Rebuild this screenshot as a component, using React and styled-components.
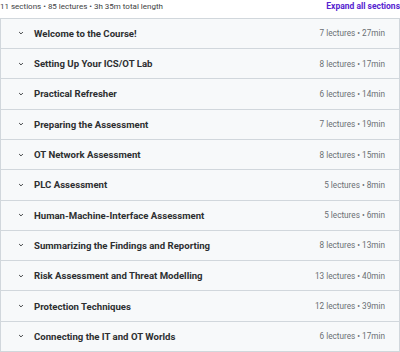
import React from "react";
import styled, { createGlobalStyle } from "styled-components";

const GlobalStyle = createGlobalStyle`
  html, body {
    margin: 0;
    padding: 0;
    background: #ffffff;
  }
  body {
    font-family: "Roboto", "Inter", sans-serif;
    color: #2d2f31;
  }
`;

const sections = [
  { title: "Welcome to the Course!", lectures: 7, length: "27min" },
  { title: "Setting Up Your ICS/OT Lab", lectures: 8, length: "17min" },
  { title: "Practical Refresher", lectures: 6, length: "14min" },
  { title: "Preparing the Assessment", lectures: 7, length: "19min" },
  { title: "OT Network Assessment", lectures: 8, length: "15min" },
  { title: "PLC Assessment", lectures: 5, length: "8min" },
  { title: "Human-Machine-Interface Assessment", lectures: 5, length: "6min" },
  { title: "Summarizing the Findings and Reporting", lectures: 8, length: "13min" },
  { title: "Risk Assessment and Threat Modelling", lectures: 13, length: "40min" },
  { title: "Protection Techniques", lectures: 12, length: "39min" },
  { title: "Connecting the IT and OT Worlds", lectures: 6, length: "17min" },
];

const Wrapper = styled.div`
  width: 400px;
  height: 352px;
  overflow: hidden;
  display: flex;
  flex-direction: column;
`;

const Summary = styled.div`
  display: flex;
  align-items: center;
  justify-content: space-between;
  height: 19px;
`;

const Meta = styled.span`
  font-size: 8px;
  color: #3e4143;
  margin-top: -5px;
`;

const ExpandAll = styled.button`
  border: none;
  background: none;
  padding: 0;
  margin-top: -5px;
  font-family: inherit;
  font-size: 8.5px;
  font-weight: 700;
  color: #5624d0;
  cursor: pointer;
`;

const List = styled.div`
  border: 1px solid #d1d7dc;
  border-bottom: none;
`;

const Row = styled.div`
  display: flex;
  align-items: center;
  height: 29.3px;
  padding: 0 14px 0 16px;
  background: #f7f9fa;
  border-bottom: 1px solid #d1d7dc;
`;

const Chevron = styled.svg`
  width: 8px;
  height: 8px;
  margin-right: 9px;
  flex-shrink: 0;
`;

const Title = styled.span`
  flex: 1;
  font-size: 9.6px;
  font-weight: 700;
  color: #2d2f31;
`;

const Stats = styled.span`
  font-size: 8.2px;
  color: #6a6f73;
`;

const ChevronIcon = () => (
  <Chevron viewBox="0 0 8 8">
    <path d="M2.4 3.3l1.6 1.6 1.6-1.6" fill="none" stroke="#3e4143" strokeWidth="1" strokeLinecap="round" strokeLinejoin="round" />
  </Chevron>
);

export default function App() {
  return (
    <Wrapper>
      <GlobalStyle />
      <Summary>
        <Meta>11 sections • 85 lectures • 3h 35m total length</Meta>
        <ExpandAll>Expand all sections</ExpandAll>
      </Summary>
      <List>
        {sections.map((s) => (
          <Row key={s.title}>
            <ChevronIcon />
            <Title>{s.title}</Title>
            <Stats>
              {s.lectures} lectures • {s.length}
            </Stats>
          </Row>
        ))}
      </List>
    </Wrapper>
  );
}
